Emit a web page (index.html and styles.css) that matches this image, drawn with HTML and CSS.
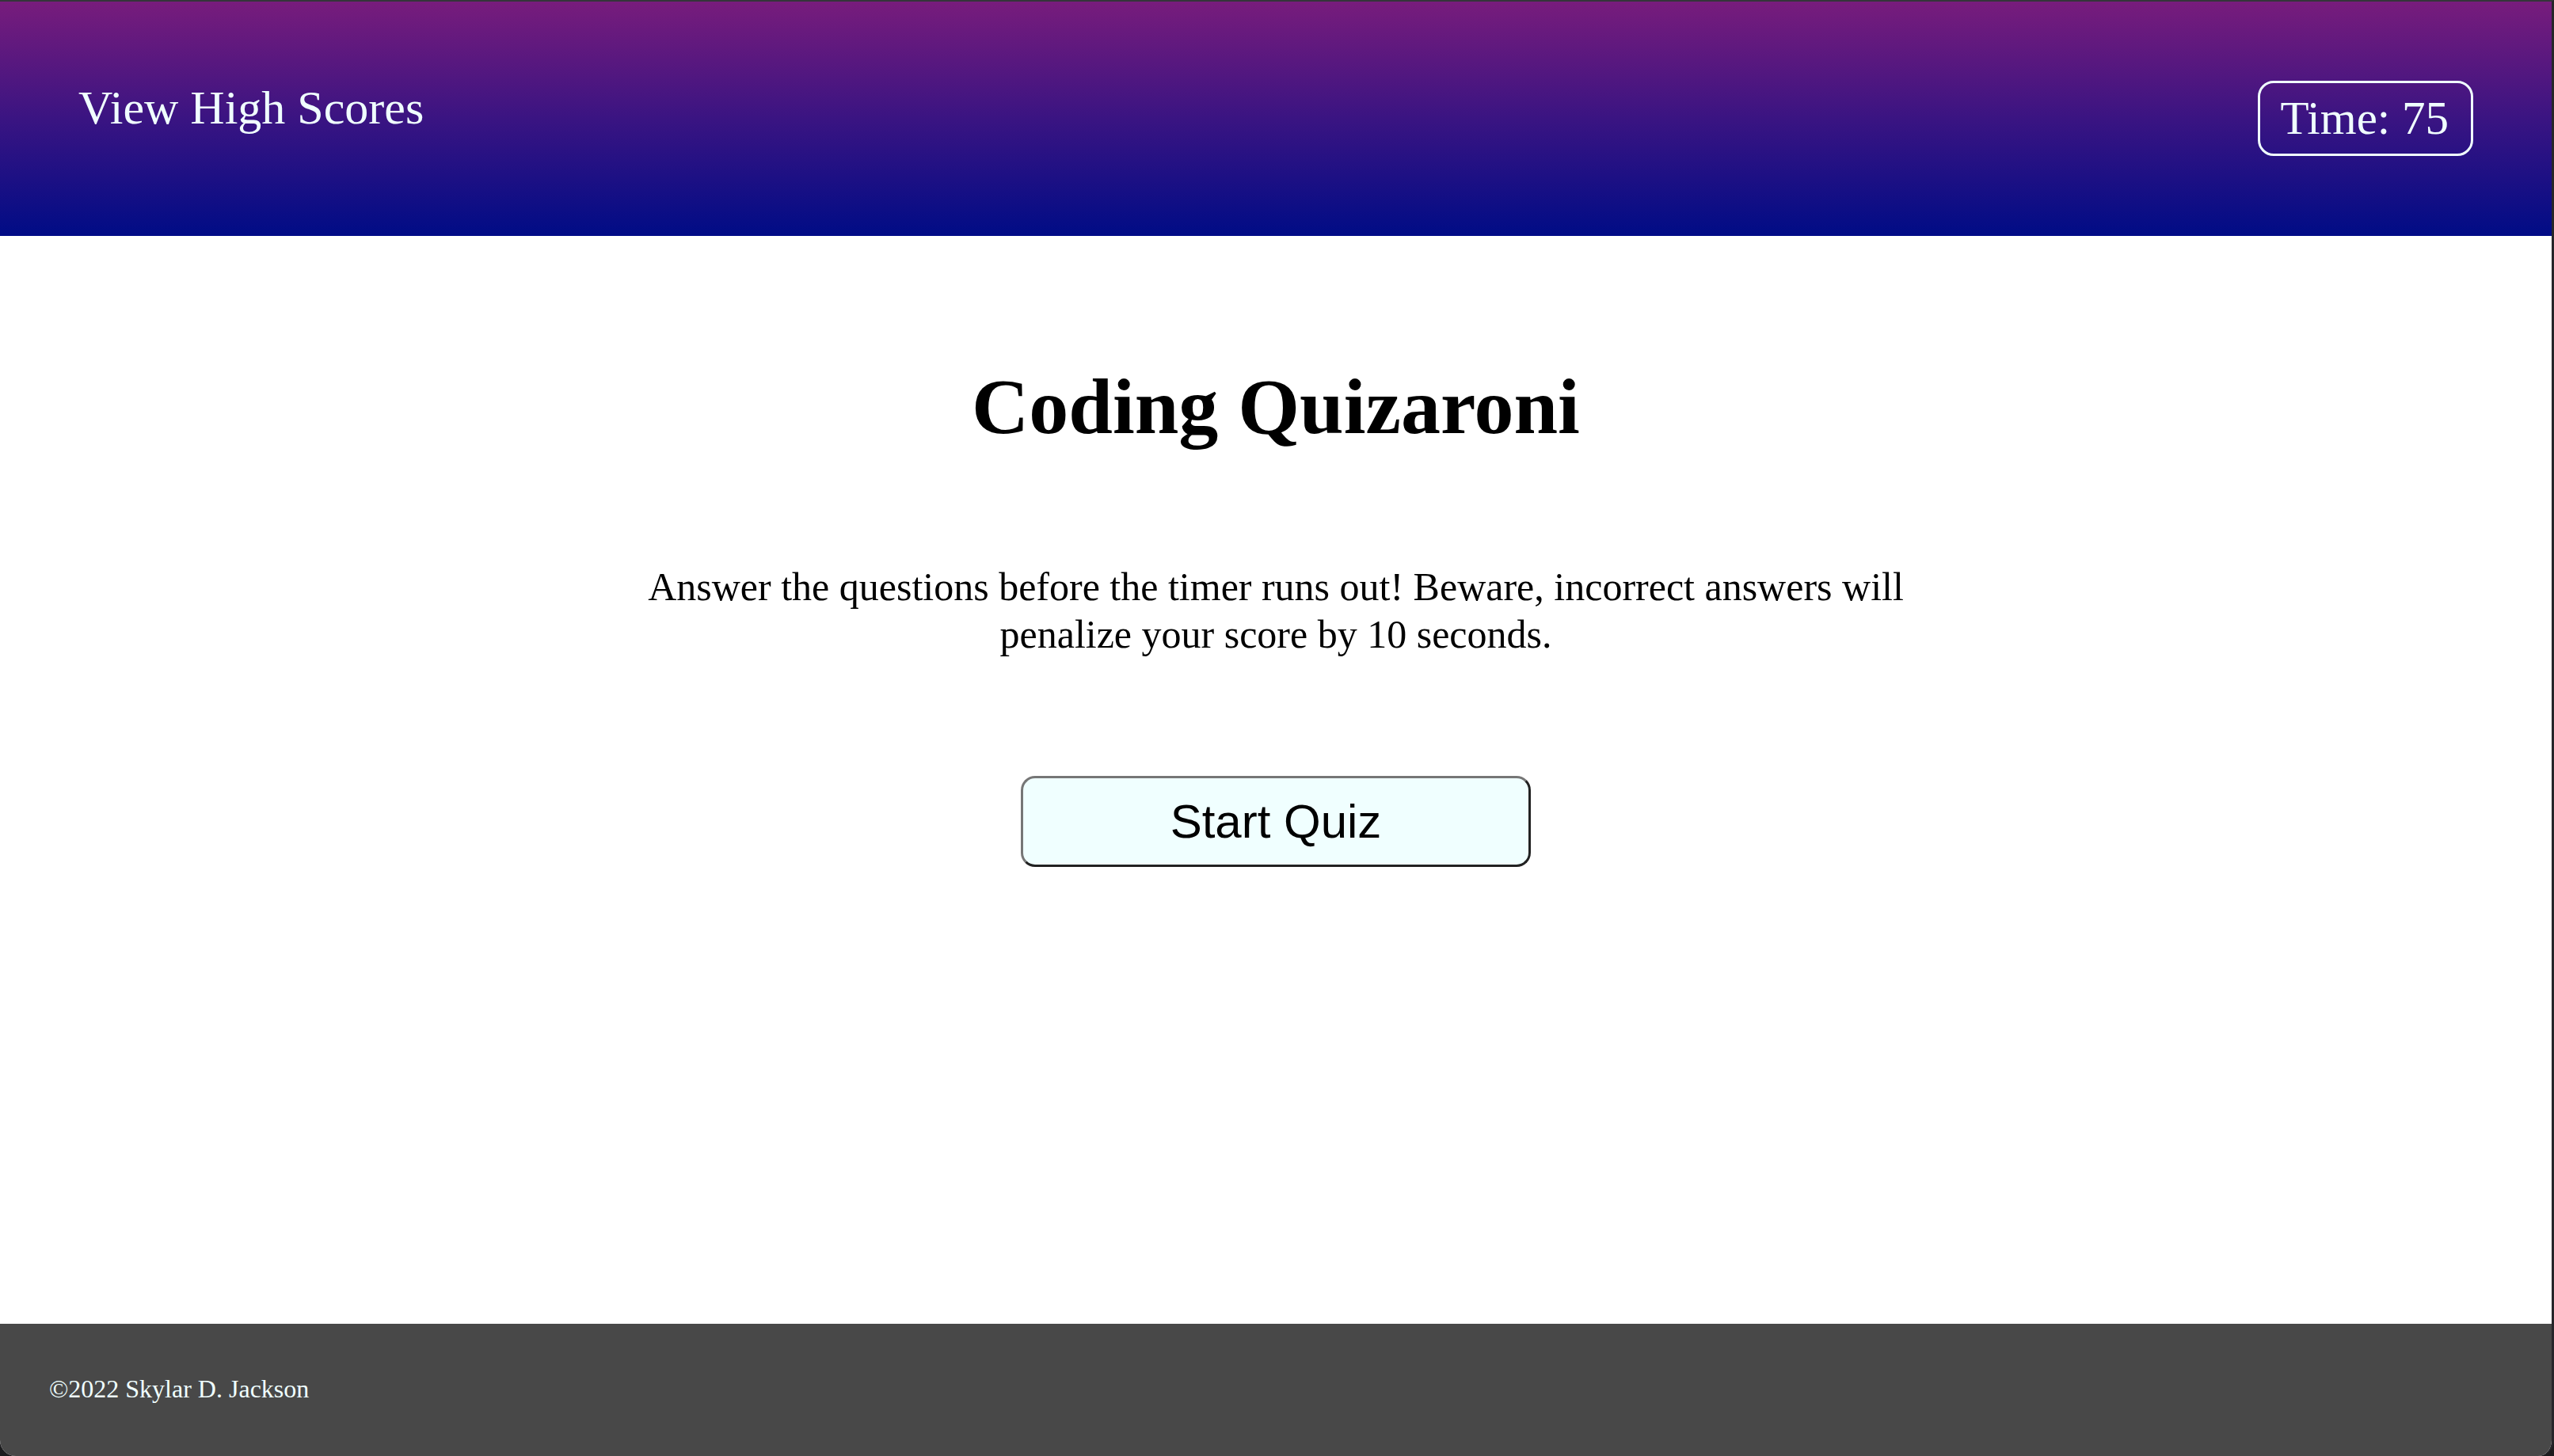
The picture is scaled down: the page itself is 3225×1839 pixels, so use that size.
FILE: index.html
```html
<!DOCTYPE html>
<html lang="en">
<head>
<meta charset="utf-8">
<title>Coding Quizaroni</title>
<link rel="stylesheet" href="styles.css">
</head>
<body>
<div class="window">
  <header class="topbar">
    <a class="scores-link" href="#">View High Scores</a>
    <div class="timer">Time: 75</div>
  </header>
  <main class="content">
    <h1 class="title">Coding Quizaroni</h1>
    <p class="intro">Answer the questions before the timer runs out! Beware, incorrect answers will penalize your score by 10 seconds.</p>
    <button class="start-btn" type="button">Start Quiz</button>
  </main>
  <footer class="footer">
    <p class="copyright">&copy;2022 Skylar D. Jackson</p>
  </footer>
</div>
</body>
</html>
```
FILE: styles.css
```css
html, body {
  margin: 0;
  padding: 0;
}

body {
  background: #1c1c1e;
  font-family: "Liberation Serif", "Times New Roman", serif;
}

.window {
  box-sizing: border-box;
  min-height: 100vh;
  display: flex;
  flex-direction: column;
  border-top: 2px solid #35353a;
  border-right: 3px solid #26262a;
  border-radius: 0 0 20px 20px;
  overflow: hidden;
  background: #ffffff;
}

.topbar {
  box-sizing: border-box;
  height: 296px;
  display: flex;
  justify-content: space-between;
  align-items: flex-start;
  padding: 100px 99px 0 99px;
  background: linear-gradient(to bottom, #781c7c 0%, #3a1482 50%, #000c86 100%);
}

.scores-link {
  font-size: 60px;
  line-height: 69px;
  color: #f0ffff;
  text-decoration: none;
}

.timer {
  font-size: 59px;
  line-height: 69px;
  color: #f0ffff;
  border: 3px solid #f0ffff;
  border-radius: 20px;
  padding: 10px 28px 10px 25px;
}

.content {
  flex: 1;
  display: flex;
  flex-direction: column;
  align-items: center;
  padding-top: 158px;
}

.title {
  margin: 0;
  font-size: 100px;
  line-height: 115px;
  font-weight: bold;
  color: #000000;
}

.intro {
  margin: 140px 0 0 0;
  max-width: 1700px;
  font-size: 50px;
  line-height: 60px;
  text-align: center;
  color: #000000;
}

.start-btn {
  margin-top: 149px;
  width: 644px;
  height: 115px;
  box-sizing: border-box;
  background: #f0ffff;
  border: 3px solid;
  border-color: #767676 #222222 #222222 #767676;
  border-radius: 18px;
  font-family: "Liberation Sans", Arial, sans-serif;
  font-size: 60px;
  line-height: 69px;
  color: #000000;
  padding: 0;
  cursor: pointer;
}

.footer {
  box-sizing: border-box;
  height: 167px;
  background: #484848;
  padding: 64px 62px 0 62px;
}

.copyright {
  margin: 0;
  font-size: 32px;
  line-height: 37px;
  color: #f0ffff;
}
```
